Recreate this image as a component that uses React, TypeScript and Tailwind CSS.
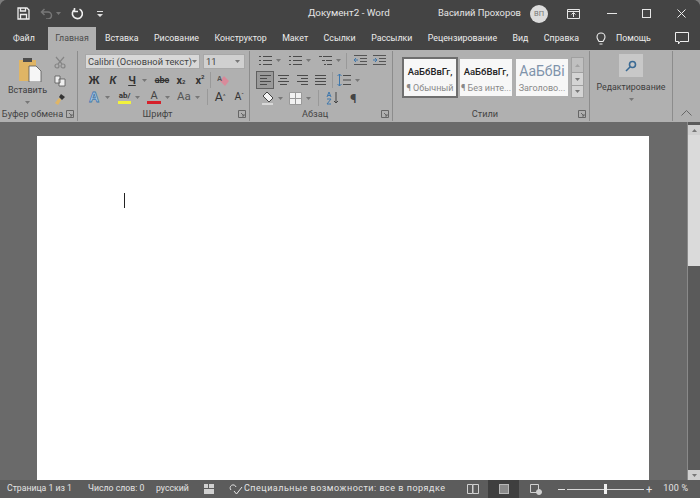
import React from "react";

const Caret = ({ className = "" }: { className?: string }) => (
  <svg width="5" height="3" viewBox="0 0 5 3" className={className}>
    <path d="M0 0h5L2.500 3z" fill="#777" />
  </svg>
);

const Launcher = () => (
  <svg width="8" height="8" viewBox="0 0 8 8" fill="none" stroke="#666" strokeWidth="1">
    <path d="M.5 7.500v-7h7v7z" />
    <path d="M3 3l3 3M6 4v2H4" />
  </svg>
);

const Lines = ({ rows }: { rows: string[] }) => (
  <svg width="13" height="12" viewBox="0 0 13 12" stroke="#4a4a4a" strokeWidth="1" className="block">
    {rows.map((d, i) => (
      <path key={i} d={d} />
    ))}
  </svg>
);

const TitleBar = () => (
  <div className="flex h-[27px] items-center bg-[#444444] text-[#e6e6e6]">
    <div className="flex w-[110px] items-center pl-[17px]">
      <svg width="13" height="13" viewBox="0 0 13 13" fill="none" stroke="#eeeeee" strokeWidth="1.300">
        <path d="M1 1h9l2 2v9H1z" />
        <path d="M3.500 1v3h5V1M3.500 12V7.500h6V12" />
      </svg>
      <svg width="13" height="11" viewBox="0 0 13 11" fill="none" stroke="#777" strokeWidth="1.500" className="ml-[10px]">
        <path d="M4.500 1L1.500 4l3 3M2 4h6a3.500 3.500 0 0 1 0 7H6" />
      </svg>
      <Caret className="ml-[3px]" />
      <svg width="13" height="13" viewBox="0 0 13 13" fill="none" stroke="#eeeeee" strokeWidth="1.600" className="ml-[10px]">
        <path d="M4 2.200a5 5 0 1 0 4.500-.1M3.500 1v3.500H7" />
      </svg>
      <svg width="6" height="6" viewBox="0 0 6 6" className="ml-[13px]" fill="#ddd">
        <path d="M0 0h6v1H0zM0 3h6L3 6z" />
      </svg>
    </div>
    <div className="w-[328px] pl-[198px] text-[9.800px] whitespace-nowrap">Документ2 - Word</div>
    <div className="w-[92px] text-[9.400px] whitespace-nowrap">Василий Прохоров</div>
    <div className="flex h-[18px] w-[18px] items-center justify-center rounded-full bg-[#dcdcdc] text-[7.500px] text-[#777]">
      ВП
    </div>
    <svg width="13" height="10" viewBox="0 0 13 10" fill="none" stroke="#e6e6e6" className="ml-[19px]">
      <path d="M.5.5h12v9H.5zM.5 2.500h12" />
      <path d="M6.500 8V4M4.500 5.500l2-2 2 2" />
    </svg>
    <div className="ml-[27px] h-px w-[10px] bg-[#e6e6e6]" />
    <div className="ml-[25px] h-[9px] w-[9px] border border-[#e6e6e6]" />
    <svg width="9" height="9" viewBox="0 0 9 9" stroke="#eeeeee" className="ml-[26px]">
      <path d="M.5.5l8 8M8.500.5l-8 8" />
    </svg>
  </div>
);

const tabs = ["Вставка", "Рисование", "Конструктор", "Макет", "Ссылки", "Рассылки", "Рецензирование", "Вид", "Справка"];

const TabRow = () => (
  <div className="flex h-[23px] items-center bg-[#444444] text-[8.800px] text-[#ededed]">
    <span className="ml-[13px] w-[35px]">Файл</span>
    <span className="flex h-full w-[48px] items-center justify-center bg-[#b0b0b0] text-[#4c4c4c]">Главная</span>
    <div className="ml-[9px] flex w-[474px] items-center justify-between whitespace-nowrap">
      {tabs.map((t) => (
        <span key={t}>{t}</span>
      ))}
    </div>
    <svg width="10" height="14" viewBox="0 0 10 14" fill="none" stroke="#eeeeee" strokeWidth="1.100" className="ml-[17px]">
      <path d="M3 9.500C2 7.500 1 7 1 5a4 4 0 0 1 8 0c0 2-1 2.500-2 4.500zM3.500 12h3" />
    </svg>
    <span className="ml-[10px] w-[59px] whitespace-nowrap">Помощь</span>
    <svg width="14" height="13" viewBox="0 0 14 13" fill="none" stroke="#eeeeee">
      <path d="M.5.5h13v9H5L3.500 12V9.500h-3z" />
    </svg>
  </div>
);

const Group = ({ label, width, launcher = true, children }: { label: string; width: number; launcher?: boolean; children: React.ReactNode }) => (
  <div className="flex h-full shrink-0 flex-col border-r border-[#8c8c8c]" style={{ width }}>
    <div className="min-h-0 flex-1">{children}</div>
    <div className="relative flex h-[14px] items-center justify-center pr-[12px] text-[9.200px] whitespace-nowrap text-[#444444]">
      {label}
      {launcher && (
        <span className="absolute right-[3px] top-[3px] flex">
          <Launcher />
        </span>
      )}
    </div>
  </div>
);

const Clipboard = () => (
  <div className="flex h-full">
    <div className="flex w-[54px] flex-col items-center pt-[6px] pl-[6px]">
      <svg width="24" height="25" viewBox="0 0 24 25">
        <rect x="1" y="3" width="17" height="21" fill="#e0b565" />
        <rect x="5" y="1" width="9" height="4" fill="#4d4d4d" />
        <path d="M11 9h7l5 5v11H11z" fill="#f6f6f6" stroke="#555" strokeWidth=".8" />
      </svg>
      <span className="-ml-[5px] mt-[2px] text-[9px] leading-[12px] text-[#3d3d3d]">Вставить</span>
      <Caret className="-ml-[5px] mt-[5px]" />
    </div>
    <div className="flex flex-col items-center gap-[6px] pt-[5px]">
      <svg width="12" height="13" viewBox="0 0 12 13" fill="none" stroke="#858585" strokeWidth="1.200">
        <path d="M2 1l6 7M10 1L4 8" />
        <circle cx="3" cy="10" r="2" />
        <circle cx="9" cy="10" r="2" />
      </svg>
      <svg width="12" height="12" viewBox="0 0 12 12" fill="#eee" stroke="#555" strokeWidth=".8">
        <path d="M1 1h5v7H1zM5 4h6v7H5z" />
      </svg>
      <svg width="12" height="13" viewBox="0 0 12 13">
        <path d="M7 1l4 3-3 3-3-3z" fill="#333" />
        <path d="M5 5l2 2-3 5-3-2z" fill="#e0b565" />
      </svg>
    </div>
  </div>
);

const Mini = ({ children, className = "" }: { children: React.ReactNode; className?: string }) => (
  <span className={`flex h-[13px] items-center justify-center ${className}`}>{children}</span>
);

const Font = () => (
  <div className="flex flex-col pl-[7px] pt-[3px] text-[#333]">
    <div className="flex gap-[3px]">
      <div className="flex h-[15px] w-[115px] items-center justify-between border border-[#a8a8a8] bg-[#d8d8d8] px-[2px] text-[9.300px] whitespace-nowrap text-[#444]">
        Calibri (Основной текст)
        <Caret />
      </div>
      <div className="flex h-[15px] w-[42px] items-center justify-between border border-[#a8a8a8] bg-[#d0d0d0] px-[2px] pr-[4px] text-[9.300px] text-[#444]">
        11
        <Caret />
      </div>
    </div>
    <div className="mt-[4px] flex h-[14px] items-center text-[11px] leading-none">
      <Mini className="w-[18px] font-bold">Ж</Mini>
      <Mini className="ml-[1px] w-[18px] font-bold italic">К</Mini>
      <Mini className="ml-[1px] w-[18px] font-bold underline">Ч</Mini>
      <Caret className="ml-[1px]" />
      <Mini className="ml-[5px] w-[20px] text-[9px] font-bold line-through">abc</Mini>
      <Mini className="ml-[1px] w-[16px] font-bold">x<sub className="text-[6px]">2</sub></Mini>
      <Mini className="ml-[3px] w-[16px] font-bold">x<sup className="text-[6px]">2</sup></Mini>
      <span className="ml-[2px] h-[16px] w-px bg-[#999]" />
      <svg width="13" height="13" viewBox="0 0 13 13" className="ml-[6px]">
        <path d="M3 7l4-5 5 5-4 5z" fill="#d98a9a" />
        <text x="0" y="7" fontSize="7" fontWeight="700" fill="#555" fontFamily="Liberation Sans">A</text>
      </svg>
    </div>
    <div className="mt-[2px] flex h-[16px] items-center">
      <svg width="14" height="14" viewBox="0 0 14 14" className="ml-[3px]">
        <text x="1" y="12" fontSize="14" fontWeight="700" fill="#b9d4ea" stroke="#3f78ad" strokeWidth=".8" fontFamily="Liberation Sans">A</text>
      </svg>
      <Caret className="ml-[3px]" />
      <div className="ml-[7px] flex w-[15px] flex-col items-center">
        <span className="text-[8px] leading-[10px] font-bold text-[#333]">ab/</span>
        <span className="h-[3px] w-[13px] bg-[#f2f23c]" />
      </div>
      <Caret className="ml-[3px]" />
      <div className="ml-[7px] flex w-[14px] flex-col items-center">
        <span className="text-[11px] leading-[11px] text-[#444]">A</span>
        <span className="h-[3px] w-[14px] bg-[#d6202a]" />
      </div>
      <Caret className="ml-[4px]" />
      <span className="ml-[7px] text-[11.500px] leading-none text-[#555]">Aa</span>
      <Caret className="ml-[4px]" />
      <span className="ml-[7px] h-[16px] w-px bg-[#999]" />
      <span className="ml-[7px] text-[12.500px] leading-none text-[#333]">A<sup className="text-[6px]">^</sup></span>
      <span className="ml-[9px] text-[10.500px] leading-none text-[#333]">A<sup className="text-[6px]">ˇ</sup></span>
    </div>
  </div>
);

const bullets = ["M4 1.500h9M4 5.500h9M4 9.500h9", "M0 1.500h2M0 5.500h2M0 9.500h2"];
const left = ["M1 1.500h11M1 4.500h7M1 7.500h11M1 10.500h7"];
const center = ["M1 1.500h11M3 4.500h7M1 7.500h11M3 10.500h7"];
const right = ["M1 1.500h11M5 4.500h7M1 7.500h11M5 10.500h7"];
const just = ["M1 1.500h11M1 4.500h11M1 7.500h11M1 10.500h11"];

const Indent = ({ flip }: { flip?: boolean }) => (
  <svg width="14" height="11" viewBox="0 0 14 11" stroke="#555" className="block">
    <path d="M1 .5h13M7 3.500h7M7 6.500h7M1 9.500h13" />
    <path d={flip ? "M1 5h4M3 3l2 2-2 2" : "M5 5H1M3 3L1 5l2 2"} stroke="#3f78ad" fill="none" />
  </svg>
);

const Paragraph = () => (
  <div className="flex flex-col pl-[6px] pt-[2px] text-[#444]">
    <div className="flex h-[15px] items-center">
      <span className="ml-[3px]"><Lines rows={bullets} /></span>
      <Caret className="ml-[4px]" />
      <span className="ml-[8px]"><Lines rows={bullets} /></span>
      <Caret className="ml-[4px]" />
      <span className="ml-[8px]"><Lines rows={["M0 1.500h3M4 1.500h9M3 5.500h3M7 5.500h6M5 9.500h2M8 9.500h5"]} /></span>
      <Caret className="ml-[4px]" />
      <span className="ml-[5px] h-[16px] w-px bg-[#999]" />
      <span className="ml-[6px]"><Indent /></span>
      <span className="ml-[5px]"><Indent flip /></span>
    </div>
    <div className="mt-[3px] flex h-[18px] items-center">
      <span className="flex h-[18px] w-[18px] items-center justify-center border border-[#5f5f5f] bg-[#9a9a9a]">
        <Lines rows={left} />
      </span>
      <span className="ml-[3px]"><Lines rows={center} /></span>
      <span className="ml-[6px]"><Lines rows={right} /></span>
      <span className="ml-[5px]"><Lines rows={just} /></span>
      <span className="ml-[5px] h-[16px] w-px bg-[#999]" />
      <svg width="14" height="14" viewBox="0 0 14 14" stroke="#3f78ad" fill="none" className="ml-[4px]">
        <path d="M2.500 1v12M.5 3l2-2 2 2M.5 11l2 2 2-2" />
        <path d="M6 2.500h8M6 7h8M6 11.500h8" stroke="#4a4a4a" />
      </svg>
      <Caret className="ml-[4px]" />
    </div>
    <div className="mt-[1px] flex h-[16px] items-center">
      <svg width="15" height="14" viewBox="0 0 15 14" className="ml-[5px]">
        <path d="M6 1l6 6-4 4-6-6z" fill="#f4f4f4" stroke="#444" />
        <rect x="1" y="12" width="11" height="2" fill="#d8d8d8" />
      </svg>
      <Caret className="ml-[2px]" />
      <svg width="13" height="13" viewBox="0 0 13 13" className="ml-[6px]" stroke="#999" fill="#f2f2f2">
        <path d="M.5.5h12v12H.5zM6.500.5v12M.5 6.500h12" />
      </svg>
      <Caret className="ml-[4px]" />
      <span className="ml-[7px] h-[16px] w-px bg-[#999]" />
      <svg width="14" height="14" viewBox="0 0 14 14" className="ml-[6px]" fill="none" stroke="#444">
        <path d="M11 1v11M9 10l2 2 2-2" />
        <path d="M2 6l2-5 2 5M3 4.500h2M2 8h4l-4 5h4" stroke="#3f78ad" />
      </svg>
      <span className="ml-[11px] text-[13px] leading-none font-bold text-[#444]">¶</span>
    </div>
  </div>
);

const StyleCard = ({ sample, name, selected, blue }: { sample: string; name: string; selected?: boolean; blue?: boolean }) => (
  <div className={`flex h-[41px] w-[56px] flex-col items-center overflow-hidden border-2 bg-[#f7f7f7] whitespace-nowrap ${selected ? "border-[#6e6e6e]" : "border-[#b0b0b0]"}`}>
    <span className={blue ? "mt-[2px] h-[20px] text-[14px] leading-[20px] text-[#7f93ab]" : "mt-[3px] h-[19px] text-[9.500px] leading-[19px] font-medium text-[#222]"}>{sample}</span>
    <span className="text-[9px] leading-[14px] text-[#888]">{name}</span>
  </div>
);

const Styles = () => (
  <div className="flex pl-[9px] pt-[6px]">
    <StyleCard sample="АаБбВвГг," name="¶ Обычный" selected />
    <StyleCard sample="АаБбВвГг," name="¶ Без инте..." />
    <StyleCard sample="АаБбВі" name="Заголово..." blue />
    <div className="ml-[1px] flex w-[13px] flex-col border border-[#a0a0a0]">
      <span className="flex h-[14px] items-center justify-center bg-[#c0c0c0]"><Caret className="rotate-180 opacity-40" /></span>
      <span className="flex h-[14px] items-center justify-center border-y border-[#a0a0a0] bg-[#d4d4d4]"><Caret /></span>
      <span className="flex h-[11px] items-center justify-center bg-[#d4d4d4]"><Caret /></span>
    </div>
  </div>
);

const Editing = () => (
  <div className="flex flex-col items-center pt-[3px]">
    <span className="flex h-[23px] w-[24px] items-center justify-center bg-[#c8c8c8]">
      <svg width="12" height="12" viewBox="0 0 12 12" fill="none" stroke="#3a6a94" strokeWidth="1.600">
        <circle cx="7.500" cy="4.500" r="3" />
        <path d="M5 7l-4 4" />
      </svg>
    </span>
    <span className="mt-[4px] text-[8.800px] leading-[12px] whitespace-nowrap text-[#3d3d3d]">Редактирование</span>
    <Caret className="mt-[5px]" />
  </div>
);

const Ribbon = () => (
  <div className="flex h-[72px] bg-[#b0b0b0] pt-[1px] pb-[1px]">
    <div className="flex h-full">
      <Group label="Буфер обмена" width={78}>
        <Clipboard />
      </Group>
      <Group label="Шрифт" width={172}>
        <Font />
      </Group>
      <Group label="Абзац" width={143}>
        <Paragraph />
      </Group>
      <Group label="Стили" width={197}>
        <Styles />
      </Group>
      <Group label="" width={83} launcher={false}>
        <Editing />
      </Group>
    </div>
    <div className="flex flex-1 items-end justify-center pb-[5px]">
      <svg width="11" height="6" viewBox="0 0 11 6" fill="none" stroke="#666">
        <path d="M.5 5.500l5-5 5 5" />
      </svg>
    </div>
  </div>
);

const Scrollbar = () => (
  <div className="flex h-full w-[13px] shrink-0 flex-col border-l border-[#8a8a8a] bg-[#5a5a5a]">
    <span className="mt-[3px] flex h-[10px] items-center justify-center bg-[#d0d0d0]">
      <Caret className="rotate-180" />
    </span>
    <span className="h-[131px] bg-[#dadada]" />
    <span className="flex-1" />
    <span className="flex h-[10px] items-center justify-center bg-[#d0d0d0]">
      <Caret />
    </span>
  </div>
);

const Document = () => (
  <div className="flex h-[358px] bg-[#6a6a6a]">
    <div className="flex-1 pl-[37px] pt-[14px] pr-[38px]">
      <div className="h-full bg-white pl-[87px] pt-[57px]">
        <div className="h-[15px] w-px bg-[#222]" />
      </div>
    </div>
    <Scrollbar />
  </div>
);

const StatusBar = () => (
  <div className="flex h-[18px] items-center bg-[#5c5c5c] text-[8.700px] whitespace-nowrap text-[#e4e4e4]">
    <span className="ml-[7px] w-[81px]">Страница 1 из 1</span>
    <span className="w-[68px]">Число слов: 0</span>
    <span className="w-[48px]">русский</span>
    <svg width="10" height="10" viewBox="0 0 10 10" fill="#d0d0d0">
      <path d="M0 0h4v4H0zM5 0h5v4H5zM0 5h10v5H0z" />
    </svg>
    <svg width="15" height="11" viewBox="0 0 15 11" fill="none" stroke="#e4e4e4" className="ml-[14px]">
      <path d="M3 6a3 3 0 1 1 5-3M6 7l2.500 3L14 3" />
    </svg>
    <span className="ml-[1px] w-[223px] text-[9px] tracking-[0.5px]">Специальные возможности: все в порядке</span>
    <svg width="12" height="10" viewBox="0 0 12 10" fill="none" stroke="#d0d0d0">
      <path d="M.5.5h5v9h-5zM6 .5h5.500v9H6z" />
    </svg>
    <span className="ml-[9px] flex h-full w-[31px] items-center justify-center bg-[#3f3f3f]">
      <span className="h-[10px] w-[10px] border border-[#b8b8b8] bg-[#8a8a8a]" />
    </span>
    <svg width="12" height="11" viewBox="0 0 12 11" fill="none" stroke="#d0d0d0" className="ml-[11px]">
      <path d="M.5.5h8v8h-8z" />
      <circle cx="9" cy="8" r="2.500" fill="#d0d0d0" />
    </svg>
    <span className="ml-[16px] h-px w-[7px] bg-[#e4e4e4]" />
    <div className="ml-[2px] flex h-[10px] w-[77px] items-center">
      <span className="h-px w-[37px] bg-[#d8d8d8]" />
      <span className="h-[10px] w-[3px] bg-[#f0f0f0]" />
      <span className="h-px flex-1 bg-[#d8d8d8]" />
    </div>
    <span className="ml-[2px] text-[11px] leading-none">+</span>
    <span className="ml-[11px] text-[9px] tracking-[0.2px]">100 %</span>
  </div>
);

export default function App() {
  return (
    <div className="h-[498px] w-[700px] bg-[#7c7c7c]">
      <div className="h-full w-full overflow-hidden rounded-t-[7px] bg-[#444444] font-['Roboto',sans-serif]">
        <TitleBar />
        <TabRow />
        <Ribbon />
        <Document />
        <StatusBar />
      </div>
    </div>
  );
}
